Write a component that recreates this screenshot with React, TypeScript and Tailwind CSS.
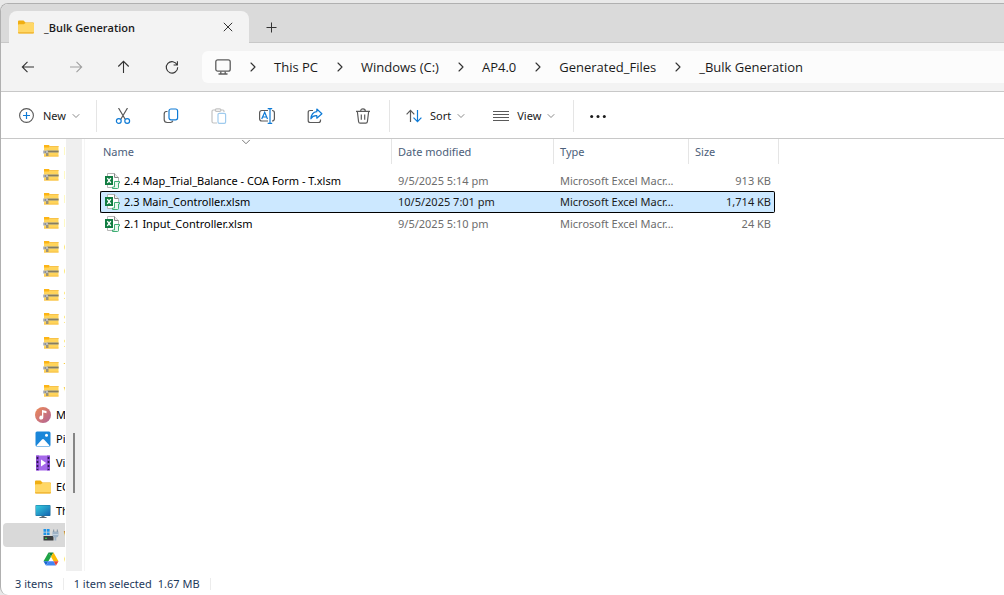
import {ReactNode} from 'react';
import {ChevronDown, ChevronRight} from 'lucide-react';

const INK = '#5a5a5a';
const BLUE = '#0f7bd6';

type IconProps = { className?: string };

function FolderIcon({className}: IconProps) {
    return (
        <svg viewBox="0 0 16 14" className={className} aria-hidden="true">
            <path d="M0 1.5Q0 .5 1 .5H5.5L7.5 2.5H15Q16 2.5 16 3.5V7H0Z" fill="#f0ae12"/>
            <path d="M0 5Q0 4.2 1 4.2H5.8L7.6 2.9H15Q16 2.9 16 3.9V12.5Q16 13.5 15 13.5H1Q0 13.5 0 12.5Z" fill="#ffd766"/>
            <path d="M0 12.3H16Q16 13.5 15 13.5H1Q0 13.5 0 12.3Z" fill="#eeb02c"/>
        </svg>
    );
}

function ZipIcon() {
    return (
        <svg viewBox="0 0 16 14" className="h-3.5 w-4" aria-hidden="true">
            <path d="M1 1H6L7 2H15.5V12.5H1Z" fill="#ffd45a"/>
            <path d="M1 1H6V3.5H1Z" fill="#fdb515"/>
            <path d="M6 2H15.5V3H6ZM1 11.5H15.5V12.5H1Z" fill="#f8c24a"/>
            <path d="M4 6H15.5V9H4Z" fill="#c2b074"/>
            <path d="M4 7H15.5V8H4Z" fill="#857d62"/>
            <path d="M0 6.5H5V9.5H0Z" fill="#b9bcc0"/>
            <path d="M1.5 7.5H3V8.5H1.5Z" fill="#66696d"/>
            <path d="M3 9H5.5V12H3Z" fill="#9a937c"/>
        </svg>
    );
}

function MusicIcon() {
    return (
        <svg viewBox="0 0 16 16" className="size-4" aria-hidden="true">
            <defs>
                <linearGradient id="music" x1="0" y1="0" x2="1" y2="1">
                    <stop offset="0" stopColor="#ee8b55"/>
                    <stop offset="1" stopColor="#b06298"/>
                </linearGradient>
            </defs>
            <circle cx="8" cy="8" r="8" fill="url(#music)"/>
            <path d="M7 3L11.5 4V6.3L8.3 5.6V10.5A2 2 0 1 1 7 8.7Z" fill="#fff"/>
        </svg>
    );
}

function PicturesIcon() {
    return (
        <svg viewBox="0 0 16 16" className="size-4" aria-hidden="true">
            <rect x=".5" y=".5" width="15" height="15" rx="1.5" fill="#1a86d9"/>
            <path d="M1.5 14.5L7 8.5Q8 7.7 9 8.5L14.5 14.5Q14 15 13 15H3Q2 15 1.5 14.5Z" fill="#fff"/>
            <circle cx="11.5" cy="4.3" r="1.5" fill="#fff"/>
        </svg>
    );
}

function VideosIcon() {
    return (
        <svg viewBox="0 0 16 16" className="size-4" aria-hidden="true">
            <rect x="1" y=".5" width="14" height="15" rx="1" fill="#a568ea"/>
            <path d="M1 .5H4V15.5H1ZM12 .5H15V15.5H12Z" fill="#8a4bd0"/>
            <path d="M2.5 2V15M13.5 2V15" stroke="#2c1650" strokeWidth="1.6" strokeDasharray="2 2"/>
            <path d="M6 4.5L11.2 8L6 11.5Z" fill="#fff"/>
        </svg>
    );
}

function ThisPcIcon() {
    return (
        <svg viewBox="0 0 16 16" className="size-4" aria-hidden="true">
            <defs>
                <linearGradient id="screen" x1="0" y1="0" x2="1" y2="1">
                    <stop offset="0" stopColor="#35cfe0"/>
                    <stop offset="1" stopColor="#1463b0"/>
                </linearGradient>
            </defs>
            <rect x=".5" y="2" width="15" height="11" rx=".8" fill="#1b6f9c"/>
            <rect x="1" y="2.5" width="14" height="10" fill="url(#screen)"/>
            <path d="M6.5 13H9.5V14H11.5V15H4.5V14H6.5Z" fill="#5e6b76"/>
        </svg>
    );
}

function DriveIcon() {
    return (
        <svg viewBox="0 0 16 14" className="h-3.5 w-4" aria-hidden="true">
            <path d="M.5 1H3.2V3.7H.5ZM3.9 1H6.6V3.7H3.9ZM.5 4.4H3.2V7H.5ZM3.9 4.4H6.6V7H3.9Z" fill="#1c93e8"/>
            <rect x=".5" y="8" width="10" height="4.5" fill="#3a3d40"/>
            <rect x="2" y="9.7" width="2" height="1.2" fill="#3fd04b"/>
            <path d="M9.5 3.5H15.5V7.5Q15 9.5 13.3 9.5V12.5H11.5V9.5Q9.8 9.5 9.5 7.5Z" fill="#9db2c6"/>
            <path d="M10.7 1.5V4M14.3 1.5V4" stroke="#8192a2"/>
            <path d="M9.5 6.5H15.5" stroke="#c3d2e0"/>
        </svg>
    );
}

function GoogleDriveIcon() {
    return (
        <svg viewBox="0 0 16 14" className="h-3.5 w-4" aria-hidden="true">
            <path d="M5.5 .5H10.5L8 4.8Z" fill="#188038"/>
            <path d="M5.5 .5L8 4.8L5.4 9.2H.5Z" fill="#1ea446"/>
            <path d="M10.5 .5L15.5 9.2H10.6L8 4.8Z" fill="#fbbc04"/>
            <path d="M.5 9.2H5.4L3 13.5Z" fill="#1967d2"/>
            <path d="M5.4 9.2H10.6L13 13.5H3Z" fill="#4285f4"/>
            <path d="M10.6 9.2H15.5L13 13.5Z" fill="#ea4335"/>
        </svg>
    );
}

function ExcelIcon() {
    return (
        <svg viewBox="0 0 16 16" className="size-4 shrink-0" aria-hidden="true">
            <path d="M3.5 .5H10.5L14.5 4.5V14.5H3.5Z" fill="#fff" stroke="#b5b5b5"/>
            <path d="M10.5 .5V4.5H14.5" fill="#eee" stroke="#8a8a8a"/>
            <rect x="1" y="3" width="8" height="9" fill="#107c41"/>
            <path d="M3.3 5.2L6.8 9.8M6.8 5.2L3.3 9.8" stroke="#fff" strokeWidth="1.4"/>
            <path d="M10.5 8.5H15.5V10H14.5V14.5Q14.5 15.5 13.5 15.5H8.5V14H10.5Z" fill="#e9f7ef" stroke="#3fae74"/>
        </svg>
    );
}

function PcOutlineIcon() {
    return (
        <svg viewBox="0 0 16 16" className="size-4" fill="none" stroke="#5c5c5c" strokeWidth="1.3" aria-hidden="true">
            <rect x=".8" y=".8" width="14.4" height="11.4" rx="2"/>
            <path d="M5.8 12.5V15M10.2 12.5V15M3.5 15H12.5"/>
        </svg>
    );
}

function BackIcon() {
    return (
        <svg viewBox="0 0 16 16" className="size-4" fill="none" stroke="currentColor" strokeWidth="1.1" aria-hidden="true">
            <path d="M14 8H2.5M7.5 2.8L2.3 8L7.5 13.2"/>
        </svg>
    );
}

function ForwardIcon() {
    return (
        <svg viewBox="0 0 16 16" className="size-4" fill="none" stroke="currentColor" strokeWidth="1.1" aria-hidden="true">
            <path d="M2 8H13.5M8.5 2.8L13.7 8L8.5 13.2"/>
        </svg>
    );
}

function UpIcon() {
    return (
        <svg viewBox="0 0 16 16" className="size-4" fill="none" stroke="currentColor" strokeWidth="1.1" aria-hidden="true">
            <path d="M7.5 14V2.5M2.3 7.5L7.5 2.3L12.7 7.5"/>
        </svg>
    );
}

function RefreshIcon() {
    return (
        <svg viewBox="0 0 16 16" className="size-4" fill="none" stroke="currentColor" strokeWidth="1.1" aria-hidden="true">
            <path d="M13.2 6A5.7 5.7 0 1 0 13.7 8.2M13.4 2.2V6H9.6"/>
        </svg>
    );
}

function NewIcon() {
    return (
        <svg viewBox="0 0 16 16" className="size-4" fill="none" aria-hidden="true">
            <circle cx="7.5" cy="7.5" r="6.9" stroke={INK} strokeWidth="1.1"/>
            <path d="M7.5 4V11M4 7.5H11" stroke={BLUE} strokeWidth="1.2"/>
        </svg>
    );
}

function CutIcon() {
    return (
        <svg viewBox="0 0 16 16" className="size-4" fill="none" strokeWidth="1.2" aria-hidden="true">
            <path d="M3.5 0L10.2 11.2M12.5 0L5.8 11.2" stroke={INK}/>
            <circle cx="3.8" cy="13" r="2.4" stroke={BLUE}/>
            <circle cx="12.2" cy="13" r="2.4" stroke={BLUE}/>
        </svg>
    );
}

function CopyIcon() {
    return (
        <svg viewBox="0 0 16 16" className="size-4" fill="none" strokeWidth="1.2" aria-hidden="true">
            <path d="M4.5 3.5H3.2Q1.2 3.7 1.2 6V11.5Q1.2 14.5 4.2 14.5H7.5Q9.3 14.4 9.8 12.8" stroke={INK}/>
            <rect x="6" y="1" width="8.6" height="10.8" rx="2" stroke={BLUE}/>
        </svg>
    );
}

function PasteIcon() {
    return (
        <svg viewBox="0 0 16 16" className="size-4" fill="none" strokeWidth="1.2" aria-hidden="true">
            <path d="M4.5 2H2.2Q1 2 1 3.5V13.5Q1 15 2.5 15H6M10 2H12Q13 2 13 3.5V4" stroke="#c2c2c2"/>
            <rect x="4.3" y=".8" width="5.6" height="2.6" rx="1.3" stroke="#c2c2c2"/>
            <rect x="7" y="5.3" width="7.6" height="10" rx="1.3" stroke="#9fcbee"/>
        </svg>
    );
}

function RenameIcon() {
    return (
        <svg viewBox="0 0 16 16" className="size-4" fill="none" strokeWidth="1.2" aria-hidden="true">
            <path d="M9 2.5H2.8Q.6 2.5 .6 4.7V10.8Q.6 13 2.8 13H9M13 2.5Q15.4 2.5 15.4 4.7V10.8Q15.4 13 13 13" stroke={INK}/>
            <path d="M2.7 11L5.7 4.3L8.5 11M3.7 9H7.6" stroke={BLUE}/>
            <path d="M8.7 .6H13.2M11 .6V15.4M8.7 15.4H13.2" stroke={BLUE}/>
        </svg>
    );
}

function ShareIcon() {
    return (
        <svg viewBox="0 0 16 16" className="size-4" fill="none" strokeWidth="1.2" strokeLinejoin="round" aria-hidden="true">
            <path d="M6 2.5H3.2Q1.2 2.5 1.2 4.5V12.5Q1.2 14.5 3.2 14.5H11.5Q13.5 14.5 13.5 12.5V11.5" stroke={INK}/>
            <path d="M9.8 1L14.9 5.7L9.8 10.2V7.7Q5.8 7.4 3.9 10.8Q4.4 4.3 9.8 3.7Z" stroke={BLUE}/>
        </svg>
    );
}

function DeleteIcon() {
    return (
        <svg viewBox="0 0 16 16" className="size-4" fill="none" stroke={INK} strokeWidth="1.2" aria-hidden="true">
            <path d="M1 3.3H15M2.3 3.3L3.6 13.7Q3.8 15.2 5.2 15.2H10.8Q12.2 15.2 12.4 13.7L13.7 3.3M5.7 3Q5.7 .8 8 .8Q10.3 .8 10.3 3M6.3 6.5V11.7M9.7 6.5V11.7"/>
        </svg>
    );
}

function SortIcon() {
    return (
        <svg viewBox="0 0 16 16" className="size-4" fill="none" strokeWidth="1.2" aria-hidden="true">
            <path d="M4.5 14V2.5M.6 6.3L4.5 2.3L8.3 6.3" stroke={INK}/>
            <path d="M11.5 2V13.5M7.5 9.7L11.5 13.7L15.4 9.7" stroke={BLUE}/>
        </svg>
    );
}

function ViewIcon() {
    return (
        <svg viewBox="0 0 16 16" className="size-4" stroke={INK} aria-hidden="true">
            <path d="M0 3.5H16M0 6.5H16M0 9.5H16M0 12.5H16"/>
        </svg>
    );
}

function MoreIcon() {
    return (
        <svg viewBox="0 0 16 16" className="size-4" fill="#1b1b1b" aria-hidden="true">
            <circle cx="1.7" cy="8.5" r="1.5"/>
            <circle cx="8" cy="8.5" r="1.5"/>
            <circle cx="14.3" cy="8.5" r="1.5"/>
        </svg>
    );
}

const crumbs = ['This PC', 'Windows (C:)', 'AP4.0', 'Generated_Files', '_Bulk Generation'];

type TreeItem = { icon: ReactNode; label: string; nested?: boolean; selected?: boolean; tint?: string };

const tree: TreeItem[] = [
    ...['B', 'B', 'B', 'B', 'C', 'C', 'S', 'S', 'S', 'T', 'V'].map((label) => ({
        icon: <ZipIcon/>, label, nested: true, tint: 'text-[#f0c040]',
    })),
    {icon: <MusicIcon/>, label: 'Music'},
    {icon: <PicturesIcon/>, label: 'Pictures'},
    {icon: <VideosIcon/>, label: 'Videos'},
    {icon: <FolderIcon className="h-3.5 w-4"/>, label: 'EC'},
    {icon: <ThisPcIcon/>, label: 'This PC'},
    {icon: <DriveIcon/>, label: 'Windows (C:)', nested: true, selected: true, tint: 'text-[#b06a20]'},
    {icon: <GoogleDriveIcon/>, label: 'G', nested: true, tint: 'text-[#f0c040]'},
];

const files = [
    {name: '2.4 Map_Trial_Balance - COA Form - T.xlsm', date: '9/5/2025 5:14 pm', type: 'Microsoft Excel Macr...', size: '913 KB'},
    {name: '2.3 Main_Controller.xlsm', date: '10/5/2025 7:01 pm', type: 'Microsoft Excel Macr...', size: '1,714 KB', selected: true},
    {name: '2.1 Input_Controller.xlsm', date: '9/5/2025 5:10 pm', type: 'Microsoft Excel Macr...', size: '24 KB'},
];

function NavButton({label, disabled, children}: { label: string; disabled?: boolean; children: ReactNode }) {
    return (
        <button aria-label={label} disabled={disabled} className="flex h-8 w-12 items-center justify-center text-[#333] disabled:text-[#a0a0a0]">
            {children}
        </button>
    );
}

function MenuButton({label, icon}: { label: string; icon: ReactNode }) {
    return (
        <button className="flex h-8 items-center text-[11px] text-[#1b1b1b]">
            {icon}
            <span className="ml-2">{label}</span>
            <ChevronDown className="ml-1 size-3 text-[#8a8a8a]"/>
        </button>
    );
}

function Divider() {
    return <div className="h-8 w-px bg-[#e5e5e5]"/>;
}

function App() {
    return (
        <div className="flex h-screen flex-col bg-[#e9e9e9] pt-[3px] font-['Noto_Sans','Liberation_Sans',sans-serif]">
            <div className="flex min-h-0 flex-1 flex-col overflow-hidden rounded-l-lg border-t border-l border-[#b0b0b0] bg-white">
                {/* Tabs */}
                <header className="flex h-[39px] shrink-0 items-end border-b border-[#c8c8c8] bg-[#dadada] pl-2 font-['Open_Sans','Liberation_Sans',sans-serif]">
                    <div className="-mb-px flex h-8 w-60 items-center rounded-t-lg bg-[#f3f3f3] pr-[11px] pl-[9px]">
                        <FolderIcon className="h-3.5 w-4"/>
                        <span className="ml-2.5 flex-1 pt-0.5 text-[11px] font-semibold text-[#1b1b1b]">_Bulk Generation</span>
                        <button aria-label="Close tab" className="flex size-5 items-center justify-center">
                            <svg viewBox="0 0 10 10" className="size-2.5" stroke="#333" aria-hidden="true">
                                <path d="M.8 .8L9.2 9.2M9.2 .8L.8 9.2"/>
                            </svg>
                        </button>
                    </div>
                    <button aria-label="New tab" className="ml-3 flex h-[30px] w-5 items-center justify-center">
                        <svg viewBox="0 0 11 11" className="size-[11px]" stroke="#333" aria-hidden="true">
                            <path d="M5.5 .5V10.5M.5 5.5H10.5"/>
                        </svg>
                    </button>
                </header>

                {/* Navigation and address */}
                <div className="flex h-[49px] shrink-0 items-center border-b border-[#c8c8c8] bg-[#f3f3f3] pl-[3px] font-['Open_Sans','Liberation_Sans',sans-serif]">
                    <NavButton label="Back"><BackIcon/></NavButton>
                    <NavButton label="Forward" disabled><ForwardIcon/></NavButton>
                    <NavButton label="Up"><UpIcon/></NavButton>
                    <NavButton label="Refresh"><RefreshIcon/></NavButton>
                    <nav aria-label="Address" className="ml-1.5 flex h-8 flex-1 items-center rounded-l-md bg-[#fcfcfc] pl-[13px]">
                        <PcOutlineIcon/>
                        {crumbs.map((crumb) => (
                            <div key={crumb} className="flex items-center">
                                <ChevronRight className="mr-[13px] ml-3.5 size-4 text-[#333]" strokeWidth={1.7}/>
                                <a href="#" className="pt-px text-[13px] text-[#1b1b1b]">{crumb}</a>
                            </div>
                        ))}
                    </nav>
                </div>

                {/* Commands */}
                <div className="flex h-[47px] shrink-0 items-center border-b border-[#c8c8c8] pt-0.5 pl-[18px]">
                    <MenuButton label="New" icon={<NewIcon/>}/>
                    <div className="w-3.5"/>
                    <Divider/>
                    <div className="flex px-0.5">
                        <NavButton label="Cut"><CutIcon/></NavButton>
                        <NavButton label="Copy"><CopyIcon/></NavButton>
                        <NavButton label="Paste" disabled><PasteIcon/></NavButton>
                        <NavButton label="Rename"><RenameIcon/></NavButton>
                        <NavButton label="Share"><ShareIcon/></NavButton>
                        <NavButton label="Delete"><DeleteIcon/></NavButton>
                    </div>
                    <Divider/>
                    <div className="flex gap-[26px] px-4">
                        <MenuButton label="Sort" icon={<SortIcon/>}/>
                        <MenuButton label="View" icon={<ViewIcon/>}/>
                    </div>
                    <Divider/>
                    <NavButton label="See more"><MoreIcon/></NavButton>
                </div>

                <div className="flex min-h-0 flex-1">
                    {/* Folder tree */}
                    <aside className="flex w-[84px] shrink-0 border-r border-[#f5f5f5]">
                        <ul className="w-16 overflow-hidden pl-0.5">
                            {tree.map((item, i) => (
                                <li key={i}>
                                    <button
                                        className={`flex h-6 w-full items-center gap-[5px] rounded-l-sm text-[11px] whitespace-nowrap ${item.nested ? 'pl-10' : 'pl-8'} ${item.selected ? 'bg-[#d9d9d9]' : ''} ${item.tint ?? 'text-black'}`}
                                    >
                                        <span className="shrink-0">{item.icon}</span>
                                        <span>{item.label}</span>
                                    </button>
                                </li>
                            ))}
                        </ul>
                        <div className="ml-px flex w-4 items-end justify-center bg-[#efefef]">
                            <div className="mb-[78px] h-[60px] w-0.5 bg-[#858585]"/>
                        </div>
                    </aside>

                    {/* Files */}
                    <main className="flex-1 pl-[15px]">
                        <table className="w-[679px] table-fixed border-separate border-spacing-0 text-left text-[11px] leading-4">
                            <colgroup>
                                <col className="w-[292px]"/>
                                <col className="w-[162px]"/>
                                <col className="w-[135px]"/>
                                <col className="w-[86px]"/>
                                <col className="w-1"/>
                            </colgroup>
                            <thead className="text-[#4c607a]">
                                <tr>
                                    <th className="relative h-[31px] p-0 align-top font-normal">
                                        <ChevronDown className="absolute -top-1 left-1/2 size-3.5 -translate-x-1/2 text-[#777]" strokeWidth={1.7}/>
                                        <div className="flex h-[25px] items-center border-r border-[#e5e5e5] pl-[3px]">Name</div>
                                    </th>
                                    <th className="p-0 align-top font-normal">
                                        <div className="flex h-[25px] items-center border-r border-[#e5e5e5] pl-1.5">Date modified</div>
                                    </th>
                                    <th className="p-0 align-top font-normal">
                                        <div className="flex h-[25px] items-center border-r border-[#e5e5e5] pl-1.5">Type</div>
                                    </th>
                                    <th colSpan={2} className="p-0 align-top font-normal">
                                        <div className="flex h-[25px] items-center border-r border-[#e5e5e5] pl-1.5">Size</div>
                                    </th>
                                </tr>
                            </thead>
                            <tbody>
                                {files.map((file) => {
                                    const cell = file.selected ? 'h-[22px] border-y border-black bg-[#cce8ff] text-[#1b1b1b]' : 'h-[21px] text-[#6d6d6d]';
                                    return (
                                        <tr key={file.name} aria-selected={file.selected}>
                                            <td className={`py-0 pr-0 ${cell} ${file.selected ? 'rounded-l-xs border-l pl-[3px]' : 'pl-1'}`}>
                                                <div className="flex items-center gap-1 text-black">
                                                    <ExcelIcon/>
                                                    {file.name}
                                                </div>
                                            </td>
                                            <td className={`py-0 pr-0 pl-1.5 ${cell}`}>{file.date}</td>
                                            <td className={`py-0 pr-0 pl-1.5 ${cell}`}>{file.type}</td>
                                            <td className={`py-0 pl-0 text-right ${cell} ${file.selected ? 'rounded-r-xs border-r pr-[3px]' : 'pr-1'}`}>{file.size}</td>
                                            <td className="p-0"/>
                                        </tr>
                                    );
                                })}
                            </tbody>
                        </table>
                    </main>
                </div>

                {/* Status */}
                <footer className="flex h-6 shrink-0 items-center pt-0.5 pl-3.5 text-[11px] text-[#1e395b]">
                    <span>3 items</span>
                    <div className="mx-2.5 h-3 w-px bg-[#ececec]"/>
                    <span>1 item selected</span>
                    <span className="ml-1.5">1.67 MB</span>
                    <div className="mx-2.5 h-3 w-px bg-[#ececec]"/>
                </footer>
            </div>
        </div>
    );
}

export default App;
